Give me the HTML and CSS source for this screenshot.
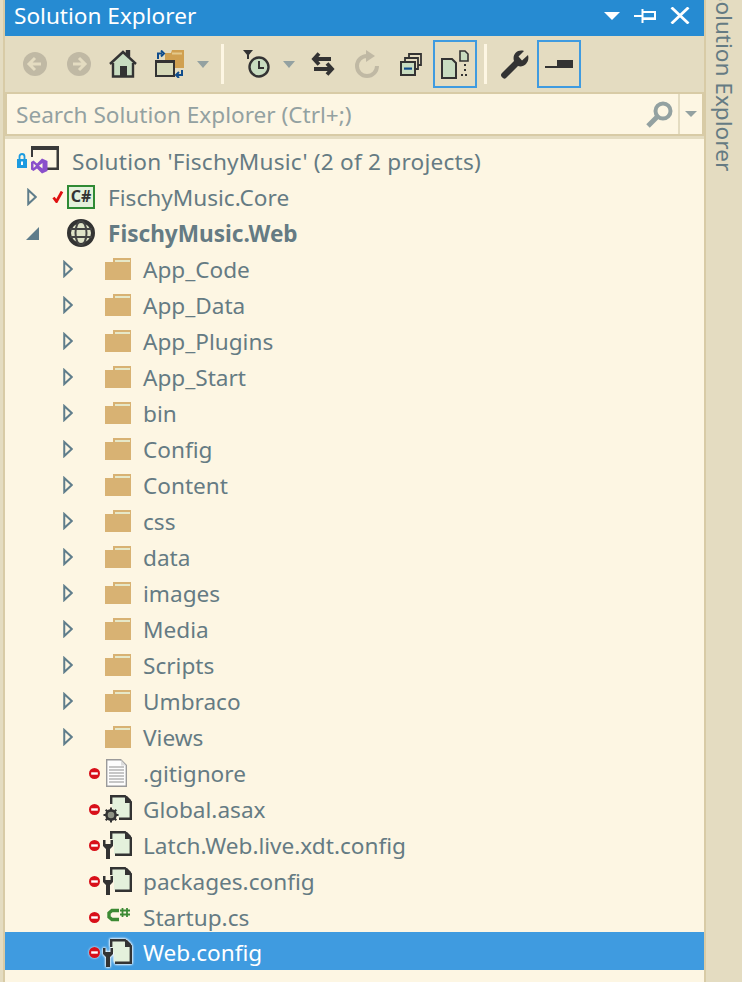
FILE: index.html
```html
<!DOCTYPE html>
<html lang="en">
<head>
<meta charset="utf-8">
<title>Solution Explorer</title>
<link rel="stylesheet" href="styles.css">
</head>
<body>
<svg class="defs" width="0" height="0" aria-hidden="true">
  <defs>
    <symbol id="i-arrow" viewBox="0 0 12 20"><path d="M1.500 1.500 L10.500 10 L1.500 18.500 Z" fill="none" stroke="#5f7d8b" stroke-width="2.400"/></symbol>
    <symbol id="i-folder" viewBox="0 0 26 22"><path d="M0 4h8V0h18v22H0z" fill="#d8b273"/><path d="M10 2h15v2H10z" fill="#e6e8c8"/></symbol>
    <symbol id="i-minus" viewBox="0 0 11 11"><circle cx="5.500" cy="5.500" r="5.500" fill="#d8101a"/><rect x="2.200" y="4.300" width="6.600" height="2.400" fill="#fff"/></symbol>
    <symbol id="i-doc" viewBox="0 0 21 28"><path d="M.7.700h14l5.600 5.600v21H.7z" fill="#fdfdfd" stroke="#9a9a9a" stroke-width="1.400"/><path d="M3 8h15M3 11h15M3 14h15M3 17h15M3 20h15M3 23h15" stroke="#b4b4b4" stroke-width="1.400"/><path d="M15 1v5.500h5z" fill="#ddd"/></symbol>
    <symbol id="i-wrenchfile" viewBox="0 0 29 28"><path d="M9 2h13l6 6v15H11V14L9 12z" fill="#e4f1dc"/><path d="M8.200 8V1.200H22l5.800 5.800v16.800H12" fill="none" stroke="#333" stroke-width="2.400"/><path d="M22 1h2l4 4v3h-6z" fill="#333"/><path d="M0 9v6l3 3v10h4V18l3-3V9H7.500v4h-5V9z" fill="#333"/></symbol>
    <symbol id="i-gearfile" viewBox="0 0 29 28"><path d="M9 2h13l6 6v15H16L9 12z" fill="#e4f1dc"/><path d="M8.200 9V1.200H22l5.800 5.800v16.800H16" fill="none" stroke="#333" stroke-width="2.400"/><path d="M22 1h2l4 4v3h-6z" fill="#333"/><circle cx="8" cy="20" r="4.600" fill="#8f9384" stroke="#333" stroke-width="2.600"/><path d="M8 12.500v3M8 24.500v3M.5 20h3M12.500 20h3M2.700 14.700l2 2M11.300 23.300l2 2M2.700 25.300l2-2M11.300 16.700l2-2" stroke="#333" stroke-width="2"/></symbol>
    <symbol id="i-csfile" viewBox="0 0 23 14"><path d="M12 2.500H5L2 5v4l3 2.500h7" fill="none" stroke="#3c8a34" stroke-width="3.400"/><path d="M15.500 0v9M20 0v9M13 2.500h10M13 6.500h10" stroke="#3c8a34" stroke-width="1.800"/></symbol>
  </defs>
</svg>
<div class="window">
  <div class="panel">
    <header class="titlebar">
      <span class="title">Solution Explorer</span>
      <span class="grip"></span>
      <span class="winbtns">
        <svg class="wb" width="16" height="8" viewBox="0 0 16 8"><path d="M0 0h16L8 8z" fill="#fff"/></svg>
        <svg class="wb" width="22" height="14" viewBox="0 0 22 14"><path d="M0 7h8M8.500 0v14M8.500 3H21v7H8.500" fill="none" stroke="#fff" stroke-width="2"/><path d="M8.500 9.500H21" stroke="#fff" stroke-width="2.400"/></svg>
        <svg class="wb" width="20" height="17" viewBox="0 0 20 17"><path d="M1.500 .5l17 16M18.500 .5l-17 16" stroke="#fff" stroke-width="2.800"/></svg>
      </span>
    </header>
    <div class="toolbar">
      <span class="tb w44"><svg width="24" height="24" viewBox="0 0 24 24"><circle cx="12" cy="12" r="12" fill="#c0b9a4"/><path d="M12 6l-6 6 6 6M6 12h12" fill="none" stroke="#e4dcc1" stroke-width="3"/></svg></span>
      <span class="tb w44"><svg width="24" height="24" viewBox="0 0 24 24"><circle cx="12" cy="12" r="12" fill="#c0b9a4"/><path d="M12 6l6 6-6 6M18 12H6" fill="none" stroke="#e4dcc1" stroke-width="3"/></svg></span>
      <span class="tb w44"><svg width="28" height="28" viewBox="0 0 28 28"><path d="M4 13L14 3l4 4V1h2v8l4 4v14H4z" fill="#c8dcc0"/><path d="M1 14L14 2l4 3.700V1h2v6.500L27 14" fill="none" stroke="#333" stroke-width="2.400"/><path d="M4 13v13.500h20V13" fill="none" stroke="#333" stroke-width="2.400"/><rect x="11" y="16" width="7" height="11" fill="#333"/></svg></span>
      <span class="tb w50"><svg width="30" height="28" viewBox="0 0 30 28"><path d="M10 3h6l1-3h12v18H10z" fill="#d0a050"/><path d="M17 2.500h10v2H17z" fill="#e4c98a"/><rect x="1" y="11" width="18" height="15" fill="#d6d9b8" stroke="#333" stroke-width="2"/><rect x="0" y="10" width="20" height="3" fill="#333"/><path d="M3 9V3.500h4M6 .5l3 3-3 3" fill="none" stroke="#0f4c8c" stroke-width="2"/><path d="M27 20v5h-5M24 28l-3-3 3-3" fill="none" stroke="#0f4c8c" stroke-width="2"/></svg></span>
      <span class="tb w16"><svg width="12" height="7" viewBox="0 0 12 7"><path d="M0 0h12L6 7z" fill="#93a1a1"/></svg></span>
      <span class="sep sep-a"></span>
      <span class="tb w44"><svg width="28" height="29" viewBox="0 0 28 29"><path d="M0 0h10L5 6z" fill="#333"/><rect x="4" y="5" width="2" height="4" fill="#333"/><circle cx="16" cy="17" r="9.500" fill="#c8dcc0" stroke="#333" stroke-width="2.400"/><path d="M16 11v7h5" fill="none" stroke="#333" stroke-width="2"/></svg></span>
      <span class="tb w20"><svg width="12" height="7" viewBox="0 0 12 7"><path d="M0 0h12L6 7z" fill="#93a1a1"/></svg></span>
      <span class="tb w44 push2"><svg width="24" height="24" viewBox="0 0 24 24"><path d="M8 1.500L3 7l5 5.500M3 7h17M16 11.500l5 5.500-5 5.500M21 17H3" fill="none" stroke="#333" stroke-width="3.800"/></svg></span>
      <span class="tb w44"><svg width="26" height="28" viewBox="0 0 26 28"><path d="M13 6A10 10 0 1 0 23 16" fill="none" stroke="#c0b9a4" stroke-width="4"/><path d="M12 0v12l9-6z" fill="#c0b9a4"/></svg></span>
      <span class="tb w44"><svg width="22" height="23" viewBox="0 0 22 23"><rect x="1" y="9" width="14" height="13" fill="#c8dcc0" stroke="#333" stroke-width="2"/><path d="M5 9V5h13v11h-3M9 5V1h12v11h-3" fill="none" stroke="#333" stroke-width="1.800"/><rect x="4" y="14.500" width="8" height="2.200" fill="#0f4c8c"/></svg></span>
      <span class="tb w44 on"><svg width="28" height="29" viewBox="0 0 28 29"><path d="M1 9h10l4 4v15H1z" fill="#c8dcc0" stroke="#333" stroke-width="2"/><path d="M19 1h5l3 3v7h-8z" fill="#c8dcc0" stroke="#333" stroke-width="1.600"/><path d="M23 14h2v2h-2zM23 19h2v2h-2zM20 24h2v2h-2zM24 24h2v2h-2z" fill="#333"/></svg></span>
      <span class="sep sep-b"></span>
      <span class="tb w44"><svg width="30" height="30" viewBox="0 0 30 30"><path d="M3 29C0.500 27 .5 25.500 2 24L14 12C12 6 17 0 24 2L18.500 7.500 22 11.500 28 6C30 13 24 19 18 17L6 29C5 30 4 30 3 29z" fill="#333"/></svg></span>
      <span class="tb w44 on"><svg width="28" height="8" viewBox="0 0 28 8"><rect x="12" y="0" width="16" height="8" fill="#333"/><rect x="0" y="6" width="14" height="2" fill="#333"/></svg></span>
    </div>
    <div class="search">
      <span class="search-text">Search Solution Explorer (Ctrl+;)</span>
      <span class="search-mag"><svg width="27" height="27" viewBox="0 0 27 27"><circle cx="17" cy="10" r="7.500" fill="none" stroke="#93a1a1" stroke-width="4"/><path d="M11 16L2 25" stroke="#93a1a1" stroke-width="5"/></svg></span>
      <span class="search-drop"><svg width="12" height="6" viewBox="0 0 12 6"><path d="M0 0h12L6 6z" fill="#93a1a1"/></svg></span>
    </div>
    <div class="tree">
      <div class="row row-sol">
        <span class="sol-icon"><svg width="43" height="28" viewBox="0 0 43 28"><path d="M14 0h28v4H14zM14 4h2v7h-2zM39.500 4H42v20H28v-2.500h11.500z" fill="#3a3a3a"/><rect x="0" y="13" width="10" height="9" fill="#1c9be0"/><path d="M2.500 13V10.500a2.500 2.500 0 0 1 5 0V13" fill="none" stroke="#1c9be0" stroke-width="1.800"/><rect x="4" y="15.500" width="2" height="3.500" fill="#fff"/><path d="M25 12.500L30.500 15V25L25 27.500 20 22.500 16.500 25 14 23.500V16L16.500 14.500 20 17.500z" fill="#8a4fcb"/><path d="M16.500 17.500v4.500l2.500-2.200zM25.500 17v5.500l-3.500-2.700z" fill="#fdf6e3"/></svg></span>
        <span class="label label-sol">Solution 'FischyMusic' (2 of 2 projects)</span>
      </div>
      <div class="row row-proj">
        <svg class="arrow" width="10" height="18"><use href="#i-arrow"/></svg>
        <svg class="check" width="12" height="12" viewBox="0 0 12 12"><path d="M1.500 6.500L4.500 10.500 10 .5" fill="none" stroke="#e01010" stroke-width="2.800"/></svg>
        <span class="cs-badge">C#</span>
        <span class="label">FischyMusic.Core</span>
      </div>
      <div class="row row-web">
        <svg class="arrow-open" width="13" height="13" viewBox="0 0 13 13"><path d="M13 0v13H0z" fill="#5f7d8b"/></svg>
        <svg class="globe" width="28" height="28" viewBox="0 0 28 28"><circle cx="14" cy="14" r="12" fill="#dfe3c8" stroke="#333" stroke-width="4"/><ellipse cx="14" cy="14" rx="5.500" ry="12" fill="none" stroke="#444" stroke-width="2"/><path d="M3 10h22M3 18h22" stroke="#444" stroke-width="2"/></svg>
        <span class="label bold">FischyMusic.Web</span>
      </div>
      <div class="row row-folder"><svg class="arrow" width="10" height="18"><use href="#i-arrow"/></svg><svg class="folder" width="26" height="22"><use href="#i-folder"/></svg><span class="label">App_Code</span></div>
      <div class="row row-folder"><svg class="arrow" width="10" height="18"><use href="#i-arrow"/></svg><svg class="folder" width="26" height="22"><use href="#i-folder"/></svg><span class="label">App_Data</span></div>
      <div class="row row-folder"><svg class="arrow" width="10" height="18"><use href="#i-arrow"/></svg><svg class="folder" width="26" height="22"><use href="#i-folder"/></svg><span class="label">App_Plugins</span></div>
      <div class="row row-folder"><svg class="arrow" width="10" height="18"><use href="#i-arrow"/></svg><svg class="folder" width="26" height="22"><use href="#i-folder"/></svg><span class="label">App_Start</span></div>
      <div class="row row-folder"><svg class="arrow" width="10" height="18"><use href="#i-arrow"/></svg><svg class="folder" width="26" height="22"><use href="#i-folder"/></svg><span class="label">bin</span></div>
      <div class="row row-folder"><svg class="arrow" width="10" height="18"><use href="#i-arrow"/></svg><svg class="folder" width="26" height="22"><use href="#i-folder"/></svg><span class="label">Config</span></div>
      <div class="row row-folder"><svg class="arrow" width="10" height="18"><use href="#i-arrow"/></svg><svg class="folder" width="26" height="22"><use href="#i-folder"/></svg><span class="label">Content</span></div>
      <div class="row row-folder"><svg class="arrow" width="10" height="18"><use href="#i-arrow"/></svg><svg class="folder" width="26" height="22"><use href="#i-folder"/></svg><span class="label">css</span></div>
      <div class="row row-folder"><svg class="arrow" width="10" height="18"><use href="#i-arrow"/></svg><svg class="folder" width="26" height="22"><use href="#i-folder"/></svg><span class="label">data</span></div>
      <div class="row row-folder"><svg class="arrow" width="10" height="18"><use href="#i-arrow"/></svg><svg class="folder" width="26" height="22"><use href="#i-folder"/></svg><span class="label">images</span></div>
      <div class="row row-folder"><svg class="arrow" width="10" height="18"><use href="#i-arrow"/></svg><svg class="folder" width="26" height="22"><use href="#i-folder"/></svg><span class="label">Media</span></div>
      <div class="row row-folder"><svg class="arrow" width="10" height="18"><use href="#i-arrow"/></svg><svg class="folder" width="26" height="22"><use href="#i-folder"/></svg><span class="label">Scripts</span></div>
      <div class="row row-folder"><svg class="arrow" width="10" height="18"><use href="#i-arrow"/></svg><svg class="folder" width="26" height="22"><use href="#i-folder"/></svg><span class="label">Umbraco</span></div>
      <div class="row row-folder"><svg class="arrow" width="10" height="18"><use href="#i-arrow"/></svg><svg class="folder" width="26" height="22"><use href="#i-folder"/></svg><span class="label">Views</span></div>
      <div class="row row-file"><svg class="minus" width="11" height="11"><use href="#i-minus"/></svg><svg class="fi fi-doc" width="21" height="28"><use href="#i-doc"/></svg><span class="label">.gitignore</span></div>
      <div class="row row-file"><svg class="minus" width="11" height="11"><use href="#i-minus"/></svg><svg class="fi" width="29" height="28"><use href="#i-gearfile"/></svg><span class="label">Global.asax</span></div>
      <div class="row row-file"><svg class="minus" width="11" height="11"><use href="#i-minus"/></svg><svg class="fi" width="29" height="28"><use href="#i-wrenchfile"/></svg><span class="label">Latch.Web.live.xdt.config</span></div>
      <div class="row row-file"><svg class="minus" width="11" height="11"><use href="#i-minus"/></svg><svg class="fi" width="29" height="28"><use href="#i-wrenchfile"/></svg><span class="label">packages.config</span></div>
      <div class="row row-file"><svg class="minus" width="11" height="11"><use href="#i-minus"/></svg><svg class="fi fi-cs" width="23" height="14"><use href="#i-csfile"/></svg><span class="label">Startup.cs</span></div>
      <div class="row row-file row-selected"><svg class="minus" width="11" height="11"><use href="#i-minus"/></svg><svg class="fi" width="29" height="28"><use href="#i-wrenchfile"/></svg><span class="label">Web.config</span></div>
    </div>
  </div>
  <aside class="sidetab"><span class="sidetab-text">Solution Explorer</span></aside>
</div>
</body>
</html>
```

FILE: styles.css
```css
html, body {
  margin: 0;
  padding: 0;
  height: 982px;
  overflow: hidden;
  background: #e4dcc1;
}
.defs { position: absolute; }
.window {
  display: flex;
  height: 982px;
  font-family: "Noto Sans", "Open Sans", sans-serif;
  font-size: 22.6px;
  color: #657b83;
}
.panel {
  width: 699px;
  margin-left: 3px;
  border-left: 2px solid #d8cba6;
  display: flex;
  flex-direction: column;
  flex: none;
}
.titlebar {
  height: 36px;
  box-sizing: border-box;
  background: #268bd2;
  display: flex;
  align-items: center;
  padding: 0 14px 5px 9px;
  color: #fff;
}
.title { line-height: 31px; white-space: nowrap; }
.grip {
  flex: 1;
  height: 10px;
  margin: 0 16px 0 15px;
  background-image:
    radial-gradient(#7fbce8 0.9px, transparent 1.1px),
    radial-gradient(#7fbce8 0.9px, transparent 1.1px);
  background-size: 8px 4px;
  background-position: 0 0, 4px 2px;
}
.winbtns { display: flex; align-items: center; gap: 14px; }
.toolbar {
  height: 56px;
  display: flex;
  align-items: center;
  padding-left: 8px;
  box-sizing: border-box;
}
.tb {
  display: flex;
  align-items: center;
  justify-content: center;
  height: 48px;
  box-sizing: border-box;
  flex: none;
}
.w44 { width: 44px; }
.w50 { width: 50px; }
.w16 { width: 16px; }
.w20 { width: 20px; }
.push2 { margin-left: 2px; }
.on { border: 2px solid #3f9be0; }
.sep { width: 3px; height: 40px; background: #fdf6e3; flex: none; }
.sep-a { margin: 0 11px 0 10px; }
.sep-b { margin: 0 6px 0 7px; }
.search {
  height: 44px;
  box-sizing: border-box;
  background: #fdf6e3;
  border: 2px solid #d8cba6;
  display: flex;
  align-items: center;
  color: #93a1a1;
}
.search-text { flex: 1; padding-left: 9px; white-space: nowrap; }
.search-mag { display: flex; width: 32px; height: 100%; align-items: center; }
.search-drop {
  width: 22px;
  height: 100%;
  border-left: 2px solid #e4dcc1;
  display: flex;
  align-items: center;
  justify-content: center;
}
.tree {
  flex: 1;
  background: #fdf6e3;
  margin-top: 3px;
  padding-top: 4px;
}
.row {
  height: 36px;
  display: flex;
  align-items: center;
  flex: none;
}
.label { white-space: nowrap; }
.label-sol { letter-spacing: 0.23px; }
.bold { font-weight: 700; }
.row-sol { padding-left: 12px; }
.sol-icon { display: flex; width: 43px; margin: -2px 12px 0 0; }
.row-proj { padding-left: 22px; }
.check { margin-left: 15px; }
.cs-badge {
  width: 28px;
  height: 24px;
  box-sizing: border-box;
  margin: 0 13px 0 3px;
  background: #e4f1dc;
  border: 2px solid #2f8a34;
  color: #333;
  font: 700 16px/19px "Noto Sans", sans-serif;
  text-align: center;
}
.row-web { padding-left: 21px; }
.globe { margin-left: 28px; margin-right: 13px; }
.row-folder { padding-left: 58px; }
.folder { margin-left: 32px; margin-right: 12px; }
.row-file { padding-left: 84px; }
.minus { flex: none; }
.fi { margin-left: 3px; margin-right: 11px; flex: none; }
.fi-doc { margin-left: 6px; margin-right: 16px; }
.fi-cs { margin-left: 7px; margin-right: 13px; margin-top: -4px; }
.row-selected {
  height: 38px;
  margin-top: -3px;
  padding-top: 3px;
  box-sizing: border-box;
  background: #3f9be0;
  color: #fff;
}
.row-selected .fi { filter: drop-shadow(0 0 1px #fff) drop-shadow(0 0 1px #fff); }
.row-selected .minus { filter: drop-shadow(0 0 1px #fff); }
.sidetab {
  flex: 1;
  border-left: 2px solid #d8cba6;
  overflow: hidden;
  display: flex;
  justify-content: center;
}
.sidetab-text {
  writing-mode: vertical-rl;
  white-space: nowrap;
  margin-top: -11px;
  line-height: 32px;
  height: 190px;
}
```
